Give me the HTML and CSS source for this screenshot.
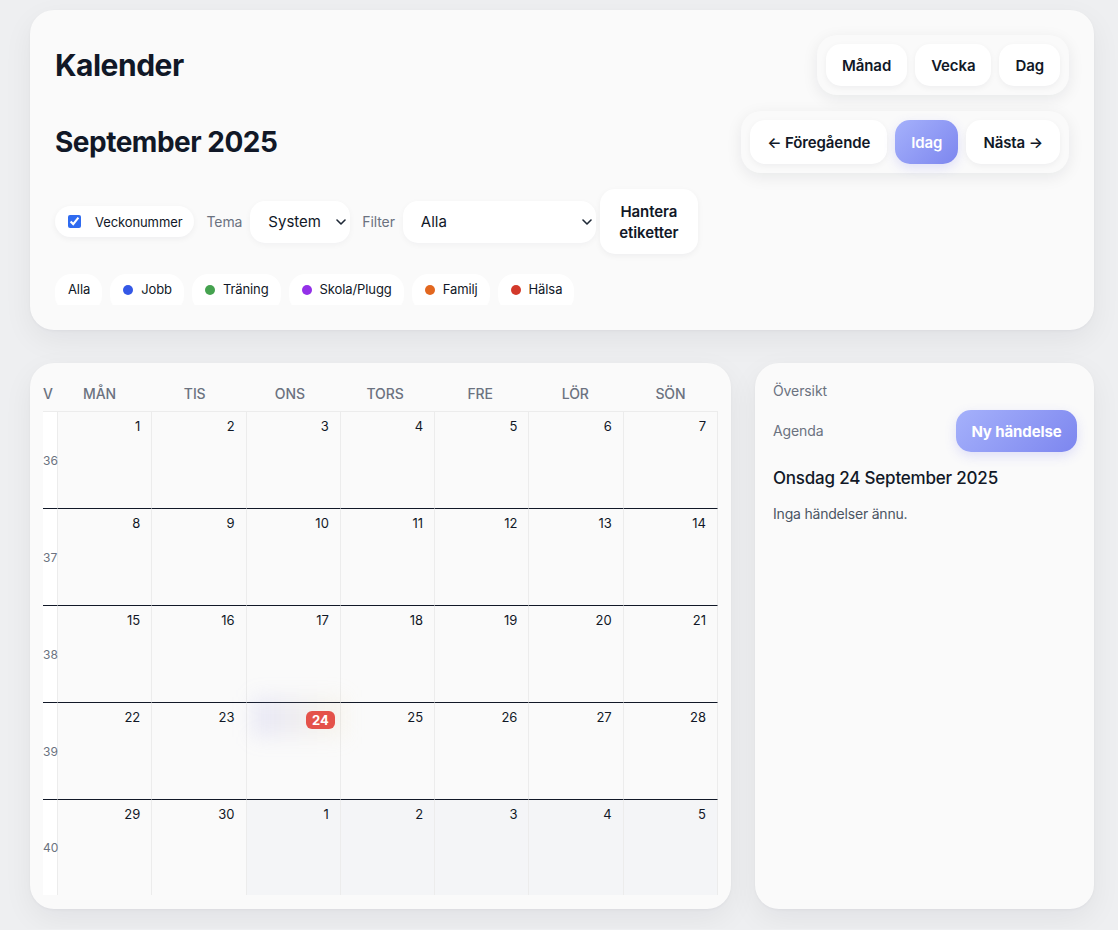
FILE: index.html
```html
<!DOCTYPE html>
<html lang="sv">
<head>
<meta charset="utf-8">
<title>Kalender</title>
<link rel="stylesheet" href="styles.css">
</head>
<body>
<div class="app">
  <header class="card top">
    <div class="toprow">
      <h1 class="title">Kalender</h1>
      <div class="group">
        <button class="btn">Månad</button>
        <button class="btn">Vecka</button>
        <button class="btn">Dag</button>
      </div>
    </div>
    <div class="toprow">
      <h2 class="month">September 2025</h2>
      <div class="group nav">
        <button class="btn navbtn">← Föregående</button>
        <button class="btn primary navbtn idag">Idag</button>
        <button class="btn navbtn">Nästa →</button>
      </div>
    </div>
    <div class="controls">
      <label class="check"><input type="checkbox" checked><span>Veckonummer</span></label>
      <label class="field"><span class="lbl">Tema</span>
        <span class="selwrap sys"><select><option>System</option></select>
          <svg class="chev" viewBox="0 0 10 6" width="10" height="6"><path d="M1 1l4 4 4-4" fill="none" stroke="#1f2937" stroke-width="1.6" stroke-linecap="round" stroke-linejoin="round"/></svg></span>
      </label>
      <label class="field"><span class="lbl">Filter</span>
        <span class="selwrap flt"><select><option>Alla</option></select>
          <svg class="chev" viewBox="0 0 10 6" width="10" height="6"><path d="M1 1l4 4 4-4" fill="none" stroke="#1f2937" stroke-width="1.6" stroke-linecap="round" stroke-linejoin="round"/></svg></span>
      </label>
      <button class="btn tags">Hantera<br>etiketter</button>
    </div>
    <div class="chips">
      <span class="chip">Alla</span>
      <span class="chip"><i class="dot blue"></i>Jobb</span>
      <span class="chip"><i class="dot green"></i>Träning</span>
      <span class="chip"><i class="dot purple"></i>Skola/Plugg</span>
      <span class="chip"><i class="dot orange"></i>Familj</span>
      <span class="chip"><i class="dot red"></i>Hälsa</span>
    </div>
  </header>

  <main class="bottom">
    <section class="card cal">
      <div class="head">
        <div class="hd wk">V</div>
        <div class="hd">MÅN</div><div class="hd">TIS</div><div class="hd">ONS</div><div class="hd">TORS</div><div class="hd">FRE</div><div class="hd">LÖR</div><div class="hd">SÖN</div>
      </div>
      <div class="grid">
        <div class="wn first">36</div>
        <div class="day first">1</div><div class="day first">2</div><div class="day first">3</div><div class="day first">4</div><div class="day first">5</div><div class="day first">6</div><div class="day first">7</div>

        <div class="wn">37</div>
        <div class="day">8</div><div class="day">9</div><div class="day">10</div><div class="day">11</div><div class="day">12</div><div class="day">13</div><div class="day">14</div>

        <div class="wn">38</div>
        <div class="day">15</div><div class="day">16</div><div class="day">17</div><div class="day">18</div><div class="day">19</div><div class="day">20</div><div class="day">21</div>

        <div class="wn">39</div>
        <div class="day">22</div><div class="day">23</div><div class="day today"><span class="badge">24</span></div><div class="day">25</div><div class="day">26</div><div class="day">27</div><div class="day">28</div>

        <div class="wn last">40</div>
        <div class="day last">29</div><div class="day last">30</div><div class="day last other">1</div><div class="day last other">2</div><div class="day last other">3</div><div class="day last other">4</div><div class="day last other">5</div>
      </div>
    </section>

    <aside class="card side">
      <div class="muted">Översikt</div>
      <div class="agrow">
        <span class="muted">Agenda</span>
        <button class="btn primary newbtn">Ny händelse</button>
      </div>
      <h3 class="date">Onsdag 24 September 2025</h3>
      <p class="empty">Inga händelser ännu.</p>
    </aside>
  </main>
</div>
</body>
</html>
```

FILE: styles.css
```css
* { box-sizing: border-box; }
html, body { margin: 0; }
body {
  background: #eeeff1;
  font-family: Inter, "Noto Sans", "Liberation Sans", sans-serif;
  color: #111827;
}
.app {
  padding: 10px 24px 20px 30px;
  display: flex;
  flex-direction: column;
  gap: 33px;
}
.card {
  background: #fafafa;
  border-radius: 24px;
  box-shadow: 0 10px 30px rgba(15, 23, 42, 0.06), 0 1px 3px rgba(15, 23, 42, 0.04);
}
.top {
  height: 320px;
  padding: 25px;
  display: flex;
  flex-direction: column;
  gap: 16px;
}
.toprow {
  display: flex;
  justify-content: space-between;
  align-items: center;
}
.title {
  margin: 0;
  font-size: 30px;
  font-weight: 700;
  letter-spacing: -0.5px;
}
.month {
  margin: 0;
  font-size: 28px;
  font-weight: 700;
  letter-spacing: -0.5px;
}
.group {
  display: flex;
  gap: 8px;
  padding: 9px;
  background: #fafafa;
  border-radius: 20px;
  box-shadow: 0 4px 16px rgba(15, 23, 42, 0.08);
}
.btn {
  font-family: inherit;
  border: 0;
  background: #fff;
  color: #111827;
  font-size: 15px;
  font-weight: 600;
  height: 42px;
  padding: 0 16px;
  border-radius: 15px;
  box-shadow: 0 2px 6px rgba(15, 23, 42, 0.05);
  cursor: pointer;
  letter-spacing: -0.1px;
}
.navbtn { height: 44px; padding: 0 17px; }
.idag { padding: 0 16px; }
.primary {
  color: #fff;
  background: linear-gradient(135deg, #a5b1fb 0%, #7d86ef 100%);
  box-shadow: 0 4px 12px rgba(99, 102, 241, 0.18);
}
.controls {
  display: flex;
  align-items: center;
  gap: 12px;
}
.check {
  display: flex;
  align-items: center;
  gap: 14px;
  height: 31px;
  padding: 0 12px 0 13px;
  background: #fff;
  border-radius: 16px;
  font-size: 13px;
  letter-spacing: -0.1px;
  box-shadow: 0 2px 6px rgba(15, 23, 42, 0.05);
}
.check input {
  margin: 0;
  width: 13px;
  height: 13px;
  accent-color: #2f6bf0;
}
.field {
  display: flex;
  align-items: center;
  gap: 8px;
}
.lbl {
  font-size: 14px;
  color: #6b7280;
  letter-spacing: -0.1px;
}
.selwrap {
  position: relative;
  display: block;
}
.selwrap select {
  appearance: none;
  -webkit-appearance: none;
  font-family: inherit;
  font-size: 15px;
  color: #111827;
  border: 0;
  background: #fff;
  height: 42px;
  padding: 0 18px;
  border-radius: 15px;
  box-shadow: 0 2px 6px rgba(15, 23, 42, 0.04);
}
.sys select { width: 100px; }
.flt select { width: 193px; }
.chev {
  position: absolute;
  right: 4px;
  top: 18px;
  pointer-events: none;
}
.tags {
  height: 65px;
  width: 98px;
  padding: 0 10px;
  line-height: 21px;
  margin-left: -8px;
}
.chips {
  display: flex;
  gap: 8px;
  height: 31px;
  overflow: hidden;
  margin-top: 4px;
  align-items: flex-start;
}
.chip {
  display: flex;
  align-items: flex-start;
  gap: 8px;
  height: 38px;
  line-height: 31px;
  padding: 0 12px 0 13px;
  background: #fff;
  border-radius: 16px;
  font-size: 13px;
  letter-spacing: -0.1px;
  color: #111827;
}
.dot {
  width: 10px;
  height: 10px;
  border-radius: 50%;
  margin-top: 10.5px;
}
.blue { background: #3458e6; }
.green { background: #45a24f; }
.purple { background: #9330e8; }
.orange { background: #e2671f; }
.red { background: #d3392b; }

.bottom {
  display: grid;
  grid-template-columns: 701px 339px;
  gap: 24px;
}
.cal {
  height: 546px;
  padding: 12px 13px 14px;
}
.head {
  display: grid;
  grid-template-columns: 9px repeat(7, 1fr);
  height: 36px;
}
.grid {
  display: grid;
  grid-template-columns: 15px repeat(7, 1fr);
  grid-template-rows: 97px 97px 97px 97px 96px;
}
.hd {
  display: flex;
  align-items: center;
  justify-content: center;
  font-size: 14px;
  font-weight: 500;
  color: #6b7280;
  letter-spacing: -0.1px;
}
.hd.wk { justify-content: flex-start; }
.wn {
  display: flex;
  align-items: center;
  font-size: 12px;
  color: #6b7280;
  background: #fff;
  border-top: 1px solid #111827;
  border-right: 1px solid #ececec;
}
.day {
  border-top: 1px solid #111827;
  border-right: 1px solid #ececec;
  text-align: right;
  padding: 6px 11px 0 0;
  font-size: 13px;
  line-height: 16px;
  color: #111827;
  position: relative;
}
.first { border-top-color: #ececec; }
.other { background: #f4f5f7; }
.today::before {
  content: "";
  position: absolute;
  left: 6px;
  top: -6px;
  width: 92px;
  height: 40px;
  background: linear-gradient(90deg, rgba(140, 140, 230, 0.16), rgba(240, 220, 150, 0.14));
  filter: blur(10px);
  pointer-events: none;
}
.badge {
  position: relative;
  display: inline-block;
  background: #e4524a;
  color: #fff;
  font-weight: 700;
  font-size: 13px;
  line-height: 18px;
  padding: 0 6px;
  border-radius: 6px;
  margin-right: -6px;
  margin-top: 2px;
}

.side {
  height: 546px;
  padding: 18px 17px 18px 18px;
  display: flex;
  flex-direction: column;
}
.muted {
  font-size: 14px;
  line-height: 20px;
  color: #6b7280;
  letter-spacing: -0.1px;
}
.agrow {
  margin-top: 9px;
  display: flex;
  align-items: center;
  justify-content: space-between;
}
.newbtn {
  width: 121px;
  padding: 0;
  font-weight: 700;
}
.date {
  margin: 14px 0 0;
  font-size: 17px;
  line-height: 24px;
  font-weight: 500;
  letter-spacing: -0.2px;
}
.empty {
  margin: 14px 0 0;
  font-size: 14px;
  line-height: 20px;
  color: #4b5563;
  letter-spacing: -0.2px;
}
```
